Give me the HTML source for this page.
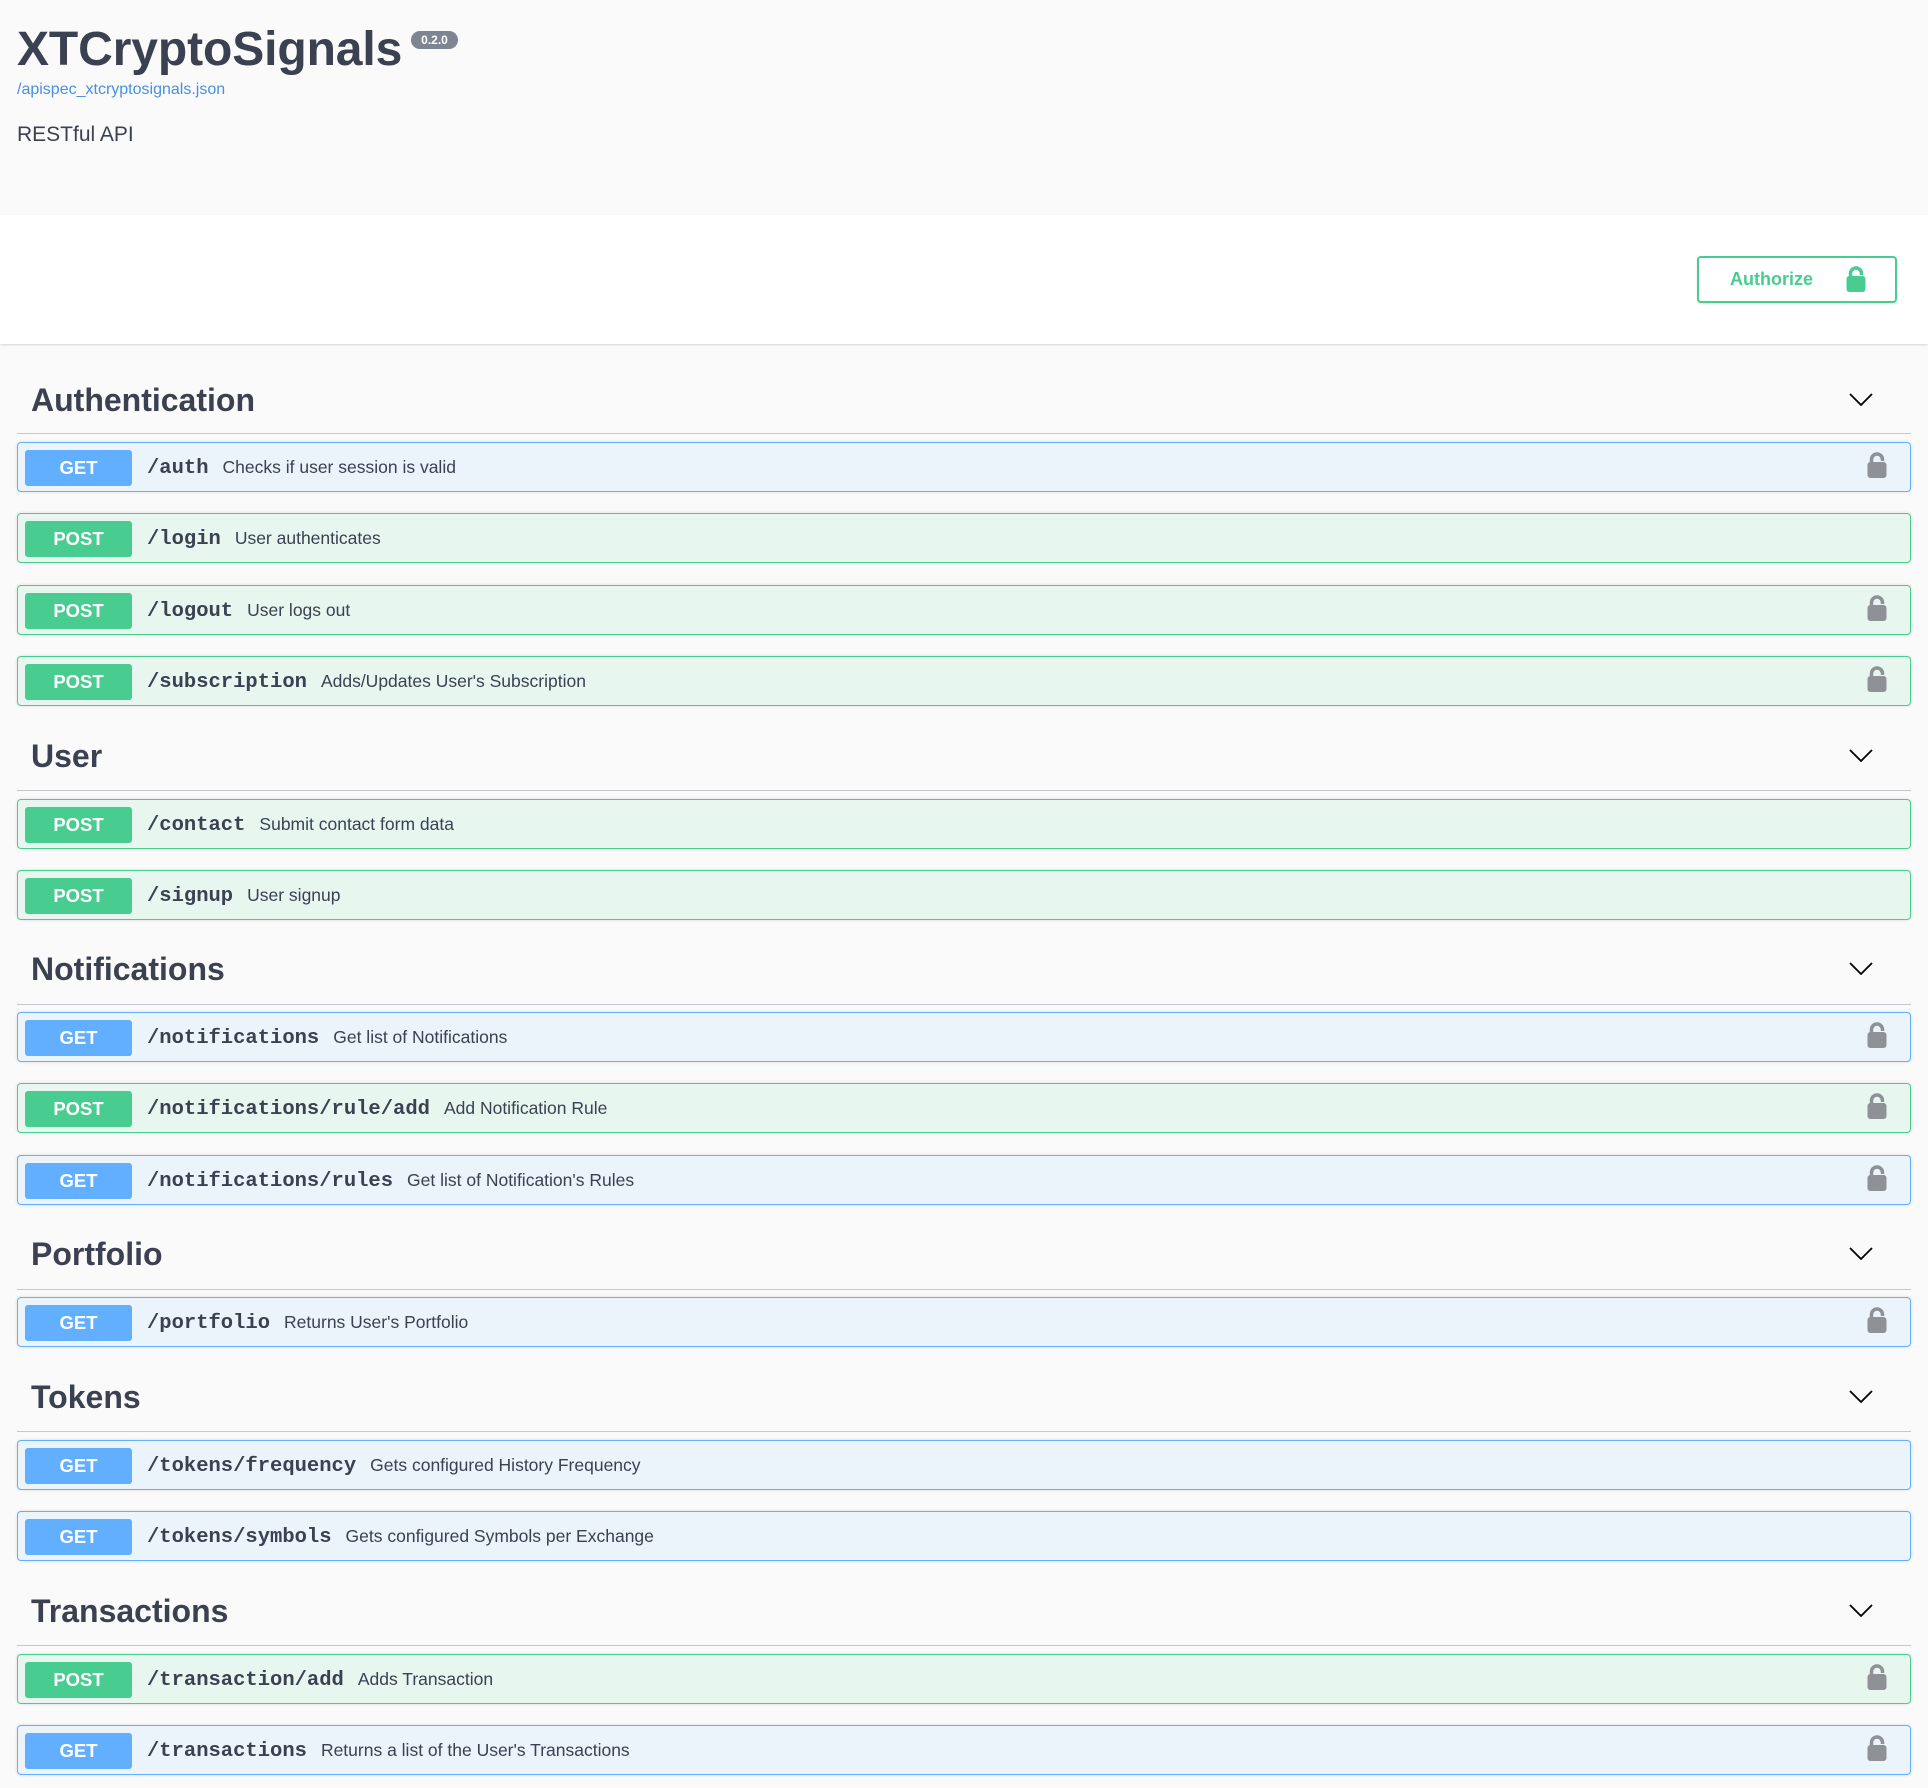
<!DOCTYPE html>
<html><head><meta charset="utf-8"><style>
*{box-sizing:border-box;margin:0;padding:0}
body{width:1928px;height:1788px;background:#fafafa;font-family:"Liberation Sans",Arial,sans-serif;color:#3b4151;position:relative;overflow:hidden}
.abs{position:absolute}
.title{left:17px;top:20px;font-size:48px;font-weight:bold;letter-spacing:-0.1px;line-height:60px}
.ver{left:411px;top:31px;width:47px;height:18px;border-radius:9px;background:#7d8492;color:#fff;font-size:12px;font-weight:bold;text-align:center;line-height:18px}
.link{left:17px;top:81px;font-size:16px;color:#4990e2}
.desc0{left:17px;top:123px;font-size:21px}
.scheme{left:0;top:215px;width:1928px;height:129px;background:#fff;box-shadow:0 1px 2px rgba(0,0,0,.15)}
.authbtn{left:1697px;top:256px;width:200px;height:47px;border:2px solid #49cc90;border-radius:4px;color:#49cc90;font-weight:bold;font-size:18px;background:#fff;box-shadow:0 1px 2px rgba(0,0,0,.1)}
.authbtn span{position:absolute;left:31px;top:11px}
.authbtn svg{position:absolute;left:147px;top:8px}
.tag{left:31px;font-size:32px;font-weight:bold;line-height:40px}
.line{left:17px;width:1894px;height:1px;background:#c5c7cd}
.chev{left:1849px}
.op{left:17px;width:1894px;height:50px;border:1px solid;border-radius:4px;box-shadow:0 0 3px rgba(0,0,0,.12)}
.get{background:#ebf3fb;border-color:#61affe}
.post{background:#e8f6f0;border-color:#49cc90}
.badge{position:absolute;left:7px;top:7px;width:107px;height:36px;border-radius:3px;color:#fff;font-weight:bold;font-size:18.5px;text-align:center;line-height:36px}
.get .badge{background:#61affe}
.post .badge{background:#49cc90}
.path{position:absolute;left:129px;top:0;line-height:48px;font-family:"Liberation Mono",monospace;font-weight:bold;font-size:20.5px;color:#3b4151}
.path i{font-style:normal;font-family:"Liberation Sans",Arial,sans-serif;font-weight:normal;font-size:17.5px;margin-left:14px}
.lock{position:absolute;left:1849px;top:9px}
</style></head><body>
<div class="abs title">XTCryptoSignals</div>
<div class="abs ver">0.2.0</div>
<div class="abs link">/apispec_xtcryptosignals.json</div>
<div class="abs desc0">RESTful API</div>
<div class="abs scheme"></div>
<div class="abs authbtn"><span>Authorize</span><svg width="20" height="26" viewBox="0 0 20 26"><path d="M4.5 11V7.5a5.5 5.5 0 0 1 11 0V9" fill="none" stroke="#49cc90" stroke-width="3.5"/><rect x="0.5" y="10" width="19" height="16" rx="3" fill="#49cc90"/></svg></div>

<div class="abs tag" style="top:380px">Authentication</div>
<div class="abs line" style="top:433px"></div>
<div class="abs tag" style="top:736px">User</div>
<div class="abs line" style="top:790px"></div>
<div class="abs tag" style="top:949px">Notifications</div>
<div class="abs line" style="top:1004px"></div>
<div class="abs tag" style="top:1234px">Portfolio</div>
<div class="abs line" style="top:1289px"></div>
<div class="abs tag" style="top:1377px">Tokens</div>
<div class="abs line" style="top:1431px"></div>
<div class="abs tag" style="top:1591px">Transactions</div>
<div class="abs line" style="top:1645px"></div>

<svg class="abs chev" style="top:393px" width="24" height="13" viewBox="0 0 24 13"><path d="M1 1l11 11 11-11" fill="none" stroke="#000" stroke-width="1.8"/></svg>
<svg class="abs chev" style="top:749px" width="24" height="13" viewBox="0 0 24 13"><path d="M1 1l11 11 11-11" fill="none" stroke="#000" stroke-width="1.8"/></svg>
<svg class="abs chev" style="top:962px" width="24" height="13" viewBox="0 0 24 13"><path d="M1 1l11 11 11-11" fill="none" stroke="#000" stroke-width="1.8"/></svg>
<svg class="abs chev" style="top:1247px" width="24" height="13" viewBox="0 0 24 13"><path d="M1 1l11 11 11-11" fill="none" stroke="#000" stroke-width="1.8"/></svg>
<svg class="abs chev" style="top:1390px" width="24" height="13" viewBox="0 0 24 13"><path d="M1 1l11 11 11-11" fill="none" stroke="#000" stroke-width="1.8"/></svg>
<svg class="abs chev" style="top:1604px" width="24" height="13" viewBox="0 0 24 13"><path d="M1 1l11 11 11-11" fill="none" stroke="#000" stroke-width="1.8"/></svg>

<div class="abs op get" style="top:442px"><div class="badge">GET</div><div class="path">/auth<i>Checks if user session is valid</i></div><svg class="lock" width="20" height="26" viewBox="0 0 20 26"><path d="M4.5 11V7.5a5.5 5.5 0 0 1 11 0V9" fill="none" stroke="#8e9196" stroke-width="3.5"/><rect x="0.5" y="10" width="19" height="16" rx="3" fill="#8e9196"/></svg></div>
<div class="abs op post" style="top:513px"><div class="badge">POST</div><div class="path">/login<i>User authenticates</i></div></div>
<div class="abs op post" style="top:585px"><div class="badge">POST</div><div class="path">/logout<i>User logs out</i></div><svg class="lock" width="20" height="26" viewBox="0 0 20 26"><path d="M4.5 11V7.5a5.5 5.5 0 0 1 11 0V9" fill="none" stroke="#8e9196" stroke-width="3.5"/><rect x="0.5" y="10" width="19" height="16" rx="3" fill="#8e9196"/></svg></div>
<div class="abs op post" style="top:656px"><div class="badge">POST</div><div class="path">/subscription<i>Adds/Updates User's Subscription</i></div><svg class="lock" width="20" height="26" viewBox="0 0 20 26"><path d="M4.5 11V7.5a5.5 5.5 0 0 1 11 0V9" fill="none" stroke="#8e9196" stroke-width="3.5"/><rect x="0.5" y="10" width="19" height="16" rx="3" fill="#8e9196"/></svg></div>

<div class="abs op post" style="top:799px"><div class="badge">POST</div><div class="path">/contact<i>Submit contact form data</i></div></div>
<div class="abs op post" style="top:870px"><div class="badge">POST</div><div class="path">/signup<i>User signup</i></div></div>

<div class="abs op get" style="top:1012px"><div class="badge">GET</div><div class="path">/notifications<i>Get list of Notifications</i></div><svg class="lock" width="20" height="26" viewBox="0 0 20 26"><path d="M4.5 11V7.5a5.5 5.5 0 0 1 11 0V9" fill="none" stroke="#8e9196" stroke-width="3.5"/><rect x="0.5" y="10" width="19" height="16" rx="3" fill="#8e9196"/></svg></div>
<div class="abs op post" style="top:1083px"><div class="badge">POST</div><div class="path">/notifications/rule/add<i>Add Notification Rule</i></div><svg class="lock" width="20" height="26" viewBox="0 0 20 26"><path d="M4.5 11V7.5a5.5 5.5 0 0 1 11 0V9" fill="none" stroke="#8e9196" stroke-width="3.5"/><rect x="0.5" y="10" width="19" height="16" rx="3" fill="#8e9196"/></svg></div>
<div class="abs op get" style="top:1155px"><div class="badge">GET</div><div class="path">/notifications/rules<i>Get list of Notification's Rules</i></div><svg class="lock" width="20" height="26" viewBox="0 0 20 26"><path d="M4.5 11V7.5a5.5 5.5 0 0 1 11 0V9" fill="none" stroke="#8e9196" stroke-width="3.5"/><rect x="0.5" y="10" width="19" height="16" rx="3" fill="#8e9196"/></svg></div>

<div class="abs op get" style="top:1297px"><div class="badge">GET</div><div class="path">/portfolio<i>Returns User's Portfolio</i></div><svg class="lock" width="20" height="26" viewBox="0 0 20 26"><path d="M4.5 11V7.5a5.5 5.5 0 0 1 11 0V9" fill="none" stroke="#8e9196" stroke-width="3.5"/><rect x="0.5" y="10" width="19" height="16" rx="3" fill="#8e9196"/></svg></div>

<div class="abs op get" style="top:1440px"><div class="badge">GET</div><div class="path">/tokens/frequency<i>Gets configured History Frequency</i></div></div>
<div class="abs op get" style="top:1511px"><div class="badge">GET</div><div class="path">/tokens/symbols<i>Gets configured Symbols per Exchange</i></div></div>

<div class="abs op post" style="top:1654px"><div class="badge">POST</div><div class="path">/transaction/add<i>Adds Transaction</i></div><svg class="lock" width="20" height="26" viewBox="0 0 20 26"><path d="M4.5 11V7.5a5.5 5.5 0 0 1 11 0V9" fill="none" stroke="#8e9196" stroke-width="3.5"/><rect x="0.5" y="10" width="19" height="16" rx="3" fill="#8e9196"/></svg></div>
<div class="abs op get" style="top:1725px"><div class="badge">GET</div><div class="path">/transactions<i>Returns a list of the User's Transactions</i></div><svg class="lock" width="20" height="26" viewBox="0 0 20 26"><path d="M4.5 11V7.5a5.5 5.5 0 0 1 11 0V9" fill="none" stroke="#8e9196" stroke-width="3.5"/><rect x="0.5" y="10" width="19" height="16" rx="3" fill="#8e9196"/></svg></div>
</body></html>
